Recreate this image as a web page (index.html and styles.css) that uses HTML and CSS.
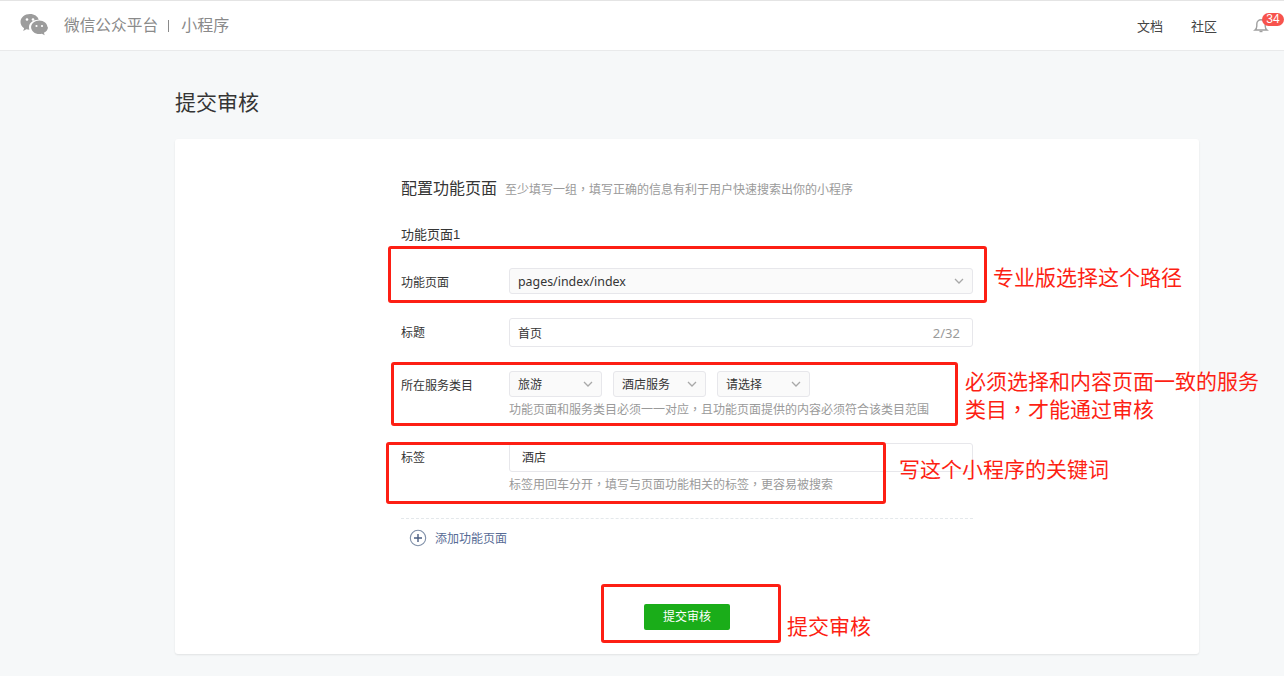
FILE: index.html
```html
<!DOCTYPE html>
<html lang="zh-CN">
<head>
<meta charset="utf-8">
<title>提交审核</title>
<link rel="stylesheet" href="styles.css">
</head>
<body>
<header class="topbar">
  <div class="brand">
    <svg class="logo" width="28" height="24" viewBox="0 0 28 24" aria-hidden="true">
      <path fill="#9c9c9c" d="M10 1C4.700 1 .5 4.500.5 9c0 2.600 1.400 4.800 3.600 6.300L3.200 18l3.200-1.700c1 .3 2 .5 3 .5-.3-.9-.4-1.700-.4-2.500 0-4.300 4-7.600 9-7.600h.7C17.800 3.300 14.300 1 10 1z"/>
      <path fill="#9c9c9c" d="M27.500 14.300c0-3.700-3.700-6.800-8.200-6.800s-8.200 3.100-8.200 6.800 3.700 6.800 8.200 6.800c.9 0 1.800-.1 2.600-.4l2.800 1.500-.8-2.400c2.500-1.200 4.100-3.300 4.100-5.500z"/>
      <circle cx="7" cy="6.500" r="1.300" fill="#fff"/><circle cx="13" cy="6.500" r="1.300" fill="#fff"/>
      <circle cx="16.500" cy="13" r="1.100" fill="#fff"/><circle cx="22" cy="13" r="1.100" fill="#fff"/>
    </svg>
    <span class="brand-name">微信公众平台</span>
    <span class="brand-sep"></span>
    <span class="brand-sub">小程序</span>
  </div>
  <nav class="topnav">
    <a class="topnav-link">文档</a>
    <a class="topnav-link">社区</a>
    <span class="bell">
      <svg width="16" height="16" viewBox="0 0 16 16" aria-hidden="true">
        <path fill="none" stroke="#a0a0a0" stroke-width="1.400" d="M2 13h12c-1.300-1-1.800-2.200-1.800-4V7A4.200 4.200 0 0 0 3.800 7v2c0 1.800-.5 3-1.800 4z"/>
        <path fill="none" stroke="#a0a0a0" stroke-width="1.400" d="M6.500 14.500h3"/>
      </svg>
      <span class="badge">34</span>
    </span>
  </nav>
</header>

<main class="page">
  <h1 class="page-title">提交审核</h1>
  <section class="card">
    <div class="form">
      <div class="form-head">
        <h2 class="form-title">配置功能页面</h2>
        <span class="form-desc">至少填写一组<span class="comma">，</span>填写正确的信息有利于用户快速搜索出你的小程序</span>
      </div>
      <h3 class="group-title">功能页面1</h3>

      <div class="row row-page">
        <label class="label">功能页面</label>
        <div class="field">
          <div class="select select-full">
            <span class="select-text">pages/index/index</span>
            <svg class="chev" width="10" height="6" viewBox="0 0 10 6"><path d="M1 1l4 4 4-4" fill="none" stroke="#a8a8a8" stroke-width="1.300"/></svg>
          </div>
        </div>
      </div>

      <div class="row row-title">
        <label class="label">标题</label>
        <div class="field">
          <div class="input input-title"><span>首页</span><span class="count">2/32</span></div>
        </div>
      </div>

      <div class="row row-cat">
        <label class="label">所在服务类目</label>
        <div class="field">
          <div class="select-group">
            <div class="select select-sm"><span>旅游</span><svg class="chev" width="10" height="6" viewBox="0 0 10 6"><path d="M1 1l4 4 4-4" fill="none" stroke="#a8a8a8" stroke-width="1.300"/></svg></div>
            <div class="select select-sm"><span>酒店服务</span><svg class="chev" width="10" height="6" viewBox="0 0 10 6"><path d="M1 1l4 4 4-4" fill="none" stroke="#a8a8a8" stroke-width="1.300"/></svg></div>
            <div class="select select-sm"><span>请选择</span><svg class="chev" width="10" height="6" viewBox="0 0 10 6"><path d="M1 1l4 4 4-4" fill="none" stroke="#a8a8a8" stroke-width="1.300"/></svg></div>
          </div>
          <p class="tip">功能页面和服务类目必须一一对应<span class="comma">，</span>且功能页面提供的内容必须符合该类目范围</p>
        </div>
      </div>

      <div class="row row-tag">
        <label class="label">标签</label>
        <div class="field">
          <div class="input input-tag"><span>酒店</span></div>
          <p class="tip tip-tag">标签用回车分开<span class="comma">，</span>填写与页面功能相关的标签<span class="comma">，</span>更容易被搜索</p>
        </div>
      </div>

      <a class="add">
        <svg width="18" height="18" viewBox="0 0 18 18" aria-hidden="true">
          <circle cx="9" cy="9" r="7.700" fill="none" stroke="#7f8fa8" stroke-width="1.100"/>
          <path d="M9 5v8M5 9h8" fill="none" stroke="#4a5d82" stroke-width="1.400"/>
        </svg>
        <span class="add-text">添加功能页面</span>
      </a>

      <div class="actions"><button class="submit" type="button">提交审核</button></div>
    </div>
  </section>
</main>

<div class="mark mark-1"></div>
<div class="mark mark-2"></div>
<div class="mark mark-3"></div>
<div class="mark mark-4"></div>
<p class="note note-1">专业版选择这个路径</p>
<p class="note note-2">必须选择和内容页面一致的服务<br>类目<span class="comma">，</span>才能通过审核</p>
<p class="note note-3">写这个小程序的关键词</p>
<p class="note note-4">提交审核</p>
</body>
</html>
```

FILE: styles.css
```css
* { box-sizing: border-box; }
html, body { margin: 0; padding: 0; }
body {
  position: relative;
  width: 1284px;
  height: 676px;
  overflow: hidden;
  background: #f6f8f9;
  color: #353535;
  font-family: "Liberation Sans", "Noto Sans CJK SC", sans-serif;
  font-size: 12px;
}
.comma {
  font-family: "Noto Sans CJK TC", sans-serif;
  font-feature-settings: "locl" 0;
  line-height: 0;
}
.topbar {
  height: 51px;
  padding: 0 15px 0 20px;
  display: flex;
  align-items: center;
  justify-content: space-between;
  background: #fff;
  border-top: 1px solid #e4e4e4;
  border-bottom: 1px solid #e9eaeb;
}
.brand { display: flex; align-items: center; color: #8a8a8a; }
.logo { margin-right: 16px; margin-top: -2px; }
.brand-name { font-size: 15.700px; line-height: 22px; }
.brand-sub { font-size: 16px; line-height: 22px; }
.brand-sep { width: 1px; height: 12px; margin: 0 12px 0 10px; background: #8a8a8a; }
.topnav { display: flex; align-items: center; }
.topnav-link { font-size: 13px; color: #444; margin-right: 28px; }
.topnav-link:last-of-type { margin-right: 27px; }
.bell { position: relative; display: block; width: 16px; height: 16px; margin-top: -2px; margin-left: 9px; }
.badge {
  position: absolute;
  left: 9px;
  top: -4px;
  width: 22px;
  height: 13px;
  border-radius: 7px;
  background: #f7534d;
  color: #fff;
  font-size: 12px;
  line-height: 13px;
  text-align: center;
}
.page { width: 1024px; margin-left: 175px; }
.page-title {
  margin: 0;
  padding-top: 36px;
  height: 88px;
  font-size: 21px;
  font-weight: 400;
  line-height: 32px;
  color: #353535;
}
.card {
  height: 515px;
  background: #fff;
  border-radius: 3px;
  box-shadow: 0 1px 2px rgba(0, 0, 0, .09);
  padding: 38px 0 0 226px;
}
.form { width: 572px; }
.form-head { display: flex; align-items: baseline; height: 24px; }
.form-title { margin: 0 8px 0 0; font-size: 16px; font-weight: 400; line-height: 24px; }
.form-desc { color: #9a9a9a; line-height: 24px; }
.group-title { margin: 24px 0 0; font-size: 13px; font-weight: 400; line-height: 20px; height: 20px; }
.row { display: flex; }
.label { width: 108px; flex: none; line-height: 18px; padding-top: 6px; }
.field { flex: 1; min-width: 0; }
.row-page { margin-top: 23px; }
.row-title { margin-top: 24px; }
.row-cat { margin-top: 24px; }
.row-tag { margin-top: 24px; }
.select {
  display: flex;
  align-items: center;
  justify-content: space-between;
  height: 26px;
  background: #fafafa;
  border: 1px solid #e7e7eb;
  border-radius: 3px;
  padding: 0 8px;
  color: #353535;
}
.select-full { font-family: "Noto Sans", "Noto Sans CJK SC", sans-serif; font-size: 12.400px; padding-right: 8px; }
.select-group { display: flex; gap: 11px; }
.select-sm { width: 93px; padding-bottom: 1px; }
.chev { flex: none; }
.input {
  display: flex;
  align-items: center;
  justify-content: space-between;
  background: #fff;
  border: 1px solid #e7e7eb;
  border-radius: 3px;
}
.input-title { height: 29px; padding: 0 12px 0 8px; }
.input-tag { height: 29px; padding: 0 12px 2px; }
.count { color: #9a9a9a; font-family: "Noto Sans", sans-serif; font-size: 13px; }
.tip { margin: 5px 0 0; color: #9a9a9a; line-height: 17px; }
.add {
  display: flex;
  align-items: center;
  gap: 8px;
  margin-top: 24px;
  padding: 10px 0 0 8px;
  height: 29px;
  border-top: 1px dashed #e4e8eb;
  color: #576b95;
}
.add svg { flex: none; }
.add-text { padding-bottom: 2px; }
.actions { display: flex; justify-content: center; margin-top: 57px; }
.submit {
  width: 86px;
  height: 26px;
  padding: 0 0 3px;
  border: 0;
  border-radius: 2px;
  background: #1aad19;
  color: #fff;
  font: inherit;
  font-size: 12px;
}
.mark {
  position: absolute;
  border: 3px solid #fd1f14;
  border-radius: 3px;
}
.mark-1 { left: 388px; top: 246px; width: 599px; height: 57px; }
.mark-2 { left: 391px; top: 362px; width: 567px; height: 64px; }
.mark-3 { left: 386px; top: 442px; width: 500px; height: 62px; }
.mark-4 { left: 601px; top: 584px; width: 180px; height: 59px; }
.note {
  position: absolute;
  margin: 0;
  color: #fd1f14;
  font-size: 21px;
  line-height: 28px;
  white-space: nowrap;
}
.note-1 { left: 993px; top: 264px; }
.note-2 { left: 965px; top: 368px; }
.note-3 { left: 899px; top: 456px; }
.note-4 { left: 787px; top: 613px; }
```
